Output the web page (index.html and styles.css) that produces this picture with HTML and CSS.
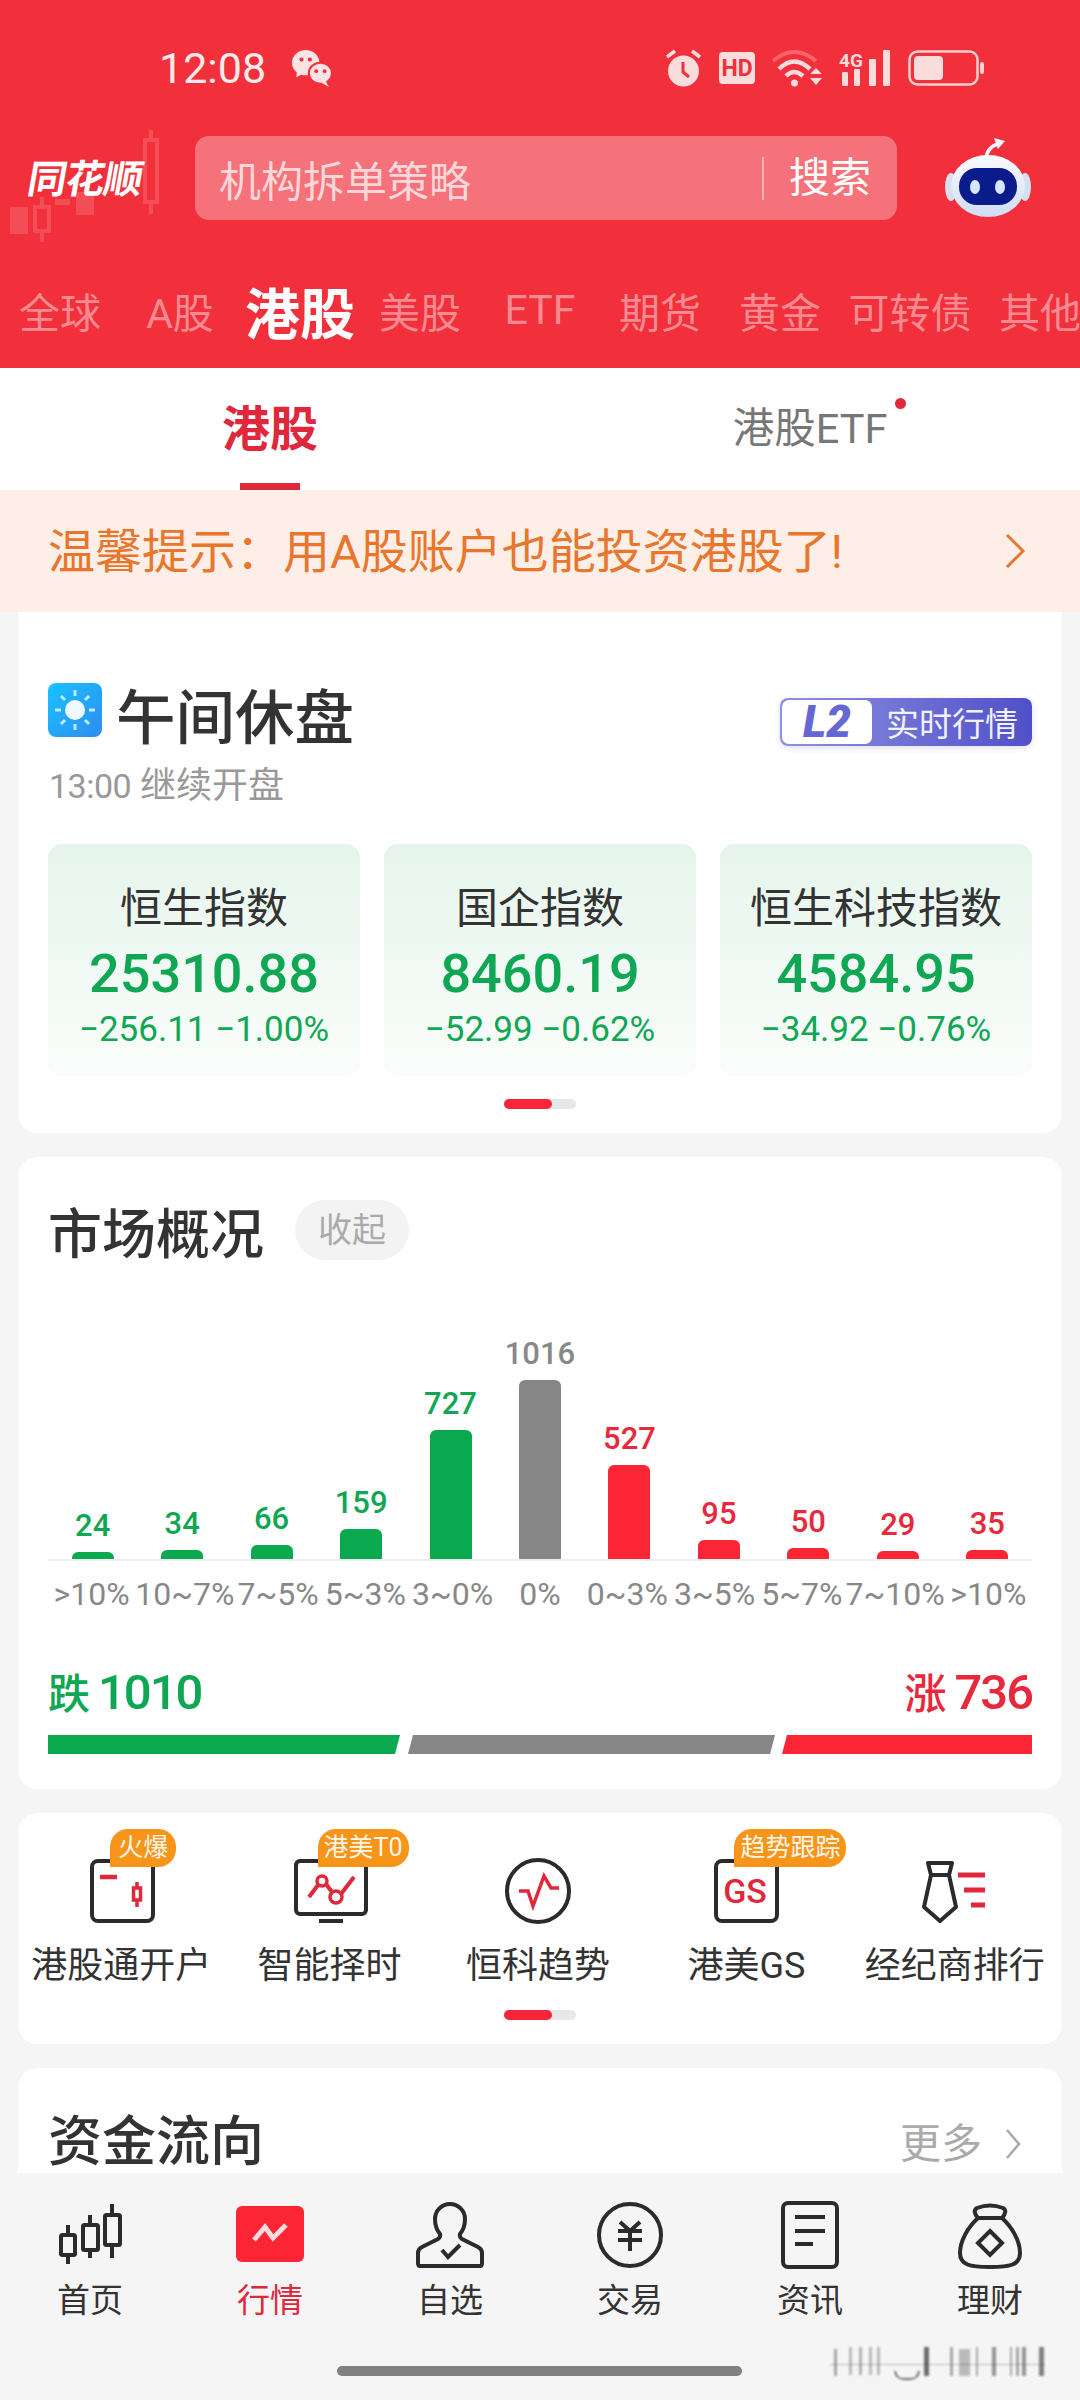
FILE: index.html
```html
<!DOCTYPE html>
<html lang="zh-CN">

<head>
    <meta charset="UTF-8">
    <meta name="viewport" content="width=device-width, initial-scale=1.0">
    <title>同花顺 行情</title>
    <link rel="stylesheet" href="styles.css">
</head>

<body>
    <div class="phone">
        <header class="top">
            <div class="status">
                <span class="time">12:08</span>
                <svg class="wechat" width="40" height="38" viewBox="0 0 38 36">
                    <ellipse cx="13" cy="13" rx="13" ry="12" fill="#fde3e3" />
                    <path d="M5 20 L4 27 L11 23 Z" fill="#fde3e3" />
                    <circle cx="9" cy="10" r="2" fill="#f1303b" />
                    <circle cx="17" cy="10" r="2" fill="#f1303b" />
                    <ellipse cx="27" cy="23" rx="11" ry="10" fill="#fde3e3" stroke="#f1303b" stroke-width="2" />
                    <path d="M32 30 L35 36 L28 32 Z" fill="#fde3e3" />
                    <circle cx="23" cy="21" r="1.8" fill="#f1303b" />
                    <circle cx="31" cy="21" r="1.8" fill="#f1303b" />
                </svg>
                <div class="status-icons">
                    <svg width="37" height="38" viewBox="0 0 37 38">
                        <circle cx="18.5" cy="22" r="15.5" fill="#fbdcdc" />
                        <path d="M18 13 V23 L24 28" fill="none" stroke="#f1303b" stroke-width="3" />
                        <path d="M2 8 L10 2 M35 8 L27 2" stroke="#fbdcdc" stroke-width="3.5" />
                    </svg>
                    <svg width="36" height="32" viewBox="0 0 36 32">
                        <rect width="36" height="32" rx="4" fill="#fbdcdc" />
                        <text class="hd-text" x="18" y="24" text-anchor="middle">HD</text>
                    </svg>
                    <svg width="50" height="37" viewBox="0 0 50 37">
                        <path d="M1 11 Q22 -7 44 11" fill="none" stroke="#f8636b" stroke-width="4" />
                        <path d="M7 19 Q22 4 38 19" fill="none" stroke="#fbdcdc" stroke-width="4.5" />
                        <path d="M14 26 Q22 18 31 26" fill="none" stroke="#fbdcdc" stroke-width="4.5" />
                        <circle cx="22.500" cy="33" r="3.500" fill="#fbdcdc" />
                        <path d="M38 24 L44 18 L50 24 Z M38 28 L50 28 L44 35 Z" fill="#fbdcdc" />
                    </svg>
                    <svg width="52" height="36" viewBox="0 0 52 36">
                        <text class="net-text" x="0" y="17">4G</text>
                        <rect x="3" y="22" width="6" height="14" rx="1" fill="#fbdcdc" />
                        <rect x="15" y="19" width="6" height="17" rx="1" fill="#fbdcdc" />
                        <rect x="30" y="9" width="7" height="27" rx="1" fill="#fbdcdc" />
                        <rect x="44" y="0" width="7" height="36" rx="1" fill="#fbdcdc" />
                    </svg>
                    <svg width="76" height="36" viewBox="0 0 76 36">
                        <rect x="1.500" y="1.500" width="68" height="33" rx="8" fill="none" stroke="#fbcfd0" stroke-width="2.500" />
                        <rect x="6" y="6" width="29" height="24" rx="4" fill="#fbdcdc" />
                        <rect x="72" y="12" width="4" height="12" rx="2" fill="#fbcfd0" />
                    </svg>
                </div>
            </div>

            <div class="search-row">
                <div class="logo">
                    <svg class="logo-bg" width="195" height="120" viewBox="0 0 195 120">
                        <g fill="#fff" opacity="0.14">
                            <rect x="10" y="85" width="18" height="27" />
                            <rect x="76" y="70" width="18" height="23" />
                            <rect x="55" y="77" width="15" height="6" />
                        </g>
                        <g fill="none" stroke="#fff" stroke-width="4" opacity="0.14">
                            <rect x="35" y="85" width="14" height="24" />
                            <path d="M42 75 V85 M42 109 V120" />
                            <rect x="145" y="18" width="12" height="62" />
                            <path d="M151 8 V18 M151 80 V92" />
                        </g>
                    </svg>
                    <span class="logo-text">同花顺</span>
                </div>
                <div class="search">
                    <span class="search-hint">机构拆单策略</span>
                    <span class="search-btn">搜索</span>
                </div>
                <svg class="robot" width="100" height="90" viewBox="0 0 100 90">
                    <defs>
                        <linearGradient id="robotHead" x1="0" y1="0" x2="0" y2="1">
                            <stop offset="0" stop-color="#fbfcff" />
                            <stop offset="1" stop-color="#cfdcf2" />
                        </linearGradient>
                    </defs>
                    <path d="M46 26 Q47 14 58 11" fill="none" stroke="#f4f7fd" stroke-width="3.500" />
                    <path d="M54 5 L65 8 L58 16 Z" fill="#f4f7fd" />
                    <ellipse cx="11" cy="54" rx="6" ry="14" fill="#d5dff0" />
                    <ellipse cx="85" cy="54" rx="6" ry="14" fill="#d5dff0" />
                    <ellipse cx="48" cy="53" rx="37" ry="31" fill="url(#robotHead)" />
                    <rect x="19" y="35" width="58" height="37" rx="18" fill="#0a1c8c" />
                    <ellipse cx="35" cy="54" rx="5" ry="7" fill="#d6e6ff" />
                    <ellipse cx="60" cy="54" rx="5" ry="7" fill="#d6e6ff" />
                </svg>
            </div>

            <nav class="market-tabs">
                <span class="market-tab">全球</span>
                <span class="market-tab">A股</span>
                <span class="market-tab active">港股</span>
                <span class="market-tab">美股</span>
                <span class="market-tab">ETF</span>
                <span class="market-tab">期货</span>
                <span class="market-tab">黄金</span>
                <span class="market-tab wide">可转债</span>
                <span class="market-tab">其他</span>
            </nav>
        </header>

        <div class="subtabs">
            <div class="subtab active">港股</div>
            <div class="subtab">港股ETF<i class="red-dot"></i></div>
        </div>

        <div class="notice">
            <span class="notice-text">温馨提示：用A股账户也能投资港股了!</span>
            <svg width="22" height="36" viewBox="0 0 22 36">
                <path d="M3 2 L19 18 L3 34" fill="none" stroke="#e8762c" stroke-width="3" />
            </svg>
        </div>

        <main class="content">
            <section class="card card-break">
                <div class="break-head">
                    <div class="break-title">
                        <svg width="54" height="54" viewBox="0 0 54 54">
                            <defs>
                                <linearGradient id="sunBg" x1="0" y1="0" x2="1" y2="1">
                                    <stop offset="0" stop-color="#17c3ff" />
                                    <stop offset="1" stop-color="#2f8cf0" />
                                </linearGradient>
                            </defs>
                            <rect width="54" height="54" rx="8" fill="url(#sunBg)" />
                            <circle cx="27" cy="27" r="10" fill="#eefaff" />
                            <g stroke="#bfeaff" stroke-width="3">
                                <path d="M27 7 V13 M27 41 V47 M7 27 H13 M41 27 H47 M13 13 L17 17 M41 13 L37 17 M13 41 L17 37 M41 41 L37 37" />
                            </g>
                        </svg>
                        <h2>午间休盘</h2>
                    </div>
                    <div class="l2-badge">
                        <span class="l2-mark">L2</span>
                        <span class="l2-text">实时行情</span>
                    </div>
                </div>
                <p class="break-sub"><span class="break-time">13:00</span> 继续开盘</p>

                <div class="index-grid">
                    <div class="index-card">
                        <div class="index-name">恒生指数</div>
                        <div class="index-value">25310.88</div>
                        <div class="index-change">−256.11 −1.00%</div>
                    </div>
                    <div class="index-card">
                        <div class="index-name">国企指数</div>
                        <div class="index-value">8460.19</div>
                        <div class="index-change">−52.99 −0.62%</div>
                    </div>
                    <div class="index-card">
                        <div class="index-name">恒生科技指数</div>
                        <div class="index-value">4584.95</div>
                        <div class="index-change">−34.92 −0.76%</div>
                    </div>
                </div>
                <div class="pager"><i></i></div>
            </section>

            <section class="card card-overview">
                <div class="overview-head">
                    <h2 class="section-title">市场概况</h2>
                    <span class="collapse">收起</span>
                </div>

                <div class="chart">
                    <div class="chart-col down"><span>24</span><i style="height:7px"></i></div>
                    <div class="chart-col down"><span>34</span><i style="height:9px"></i></div>
                    <div class="chart-col down"><span>66</span><i style="height:14px"></i></div>
                    <div class="chart-col down"><span>159</span><i style="height:30px"></i></div>
                    <div class="chart-col down"><span>727</span><i style="height:129px"></i></div>
                    <div class="chart-col flat"><span>1016</span><i style="height:179px"></i></div>
                    <div class="chart-col up"><span>527</span><i style="height:94px"></i></div>
                    <div class="chart-col up"><span>95</span><i style="height:19px"></i></div>
                    <div class="chart-col up"><span>50</span><i style="height:11px"></i></div>
                    <div class="chart-col up"><span>29</span><i style="height:8px"></i></div>
                    <div class="chart-col up"><span>35</span><i style="height:9px"></i></div>
                </div>
                <div class="chart-axis">
                    <span>&gt;10%</span><span>10~7%</span><span>7~5%</span><span>5~3%</span><span>3~0%</span><span>0%</span><span>0~3%</span><span>3~5%</span><span>5~7%</span><span>7~10%</span><span>&gt;10%</span>
                </div>

                <div class="totals">
                    <div class="total down"><small>跌</small>1010</div>
                    <div class="total up"><small>涨</small>736</div>
                </div>
                <div class="ratio">
                    <i class="ratio-down"></i>
                    <i class="ratio-flat"></i>
                    <i class="ratio-up"></i>
                </div>
            </section>

            <section class="card card-tools">
                <div class="tools">
                    <div class="tool">
                        <span class="tool-badge">火爆</span>
                        <svg width="80" height="76" viewBox="0 0 80 76">
                            <rect x="11" y="7" width="61" height="60" rx="6" class="ink" />
                            <path d="M19 23 H36" class="red" stroke-width="4.500" />
                            <path d="M56 28 V33 M56 47 V53" class="red" stroke-width="3.500" />
                            <rect x="52.500" y="34" width="7" height="12" class="red" stroke-width="3.500" />
                        </svg>
                        <div class="tool-name">港股通开户</div>
                    </div>
                    <div class="tool">
                        <span class="tool-badge">港美T0</span>
                        <svg width="80" height="76" viewBox="0 0 80 76">
                            <rect x="6" y="7" width="70" height="53" rx="4" class="ink" />
                            <path d="M29 67 H53" class="ink" />
                            <path d="M19 43 L28 31 M36 30 L42 38 M51 40 L64 23" class="red" stroke-width="4" />
                            <circle cx="32" cy="27" r="5" class="red" stroke-width="3.500" />
                            <circle cx="46" cy="43" r="6" class="red" stroke-width="3.500" />
                        </svg>
                        <div class="tool-name">智能择时</div>
                    </div>
                    <div class="tool">
                        <svg width="80" height="76" viewBox="0 0 80 76">
                            <circle cx="40" cy="37" r="31" class="ink" />
                            <path d="M21 37 H30 L35 52 L46 22 L53 34 H61" class="red" stroke-width="3.500" />
                        </svg>
                        <div class="tool-name">恒科趋势</div>
                    </div>
                    <div class="tool">
                        <span class="tool-badge">趋势跟踪</span>
                        <svg width="80" height="76" viewBox="0 0 80 76">
                            <rect x="10" y="7" width="61" height="60" rx="6" class="ink" />
                            <text class="gs-text" x="39" y="49" text-anchor="middle">GS</text>
                        </svg>
                        <div class="tool-name">港美GS</div>
                    </div>
                    <div class="tool">
                        <svg width="80" height="76" viewBox="0 0 80 76">
                            <path d="M13 9 H37 L34 21 H16 Z M16 21 L9 53 L25 67 L41 53 L34 21" class="ink" stroke-linejoin="round" />
                            <path d="M43 21 H70 M49 36 H70 M56 51 H70" class="red" stroke-width="5" />
                        </svg>
                        <div class="tool-name">经纪商排行</div>
                    </div>
                </div>
                <div class="pager"><i></i></div>
            </section>

            <section class="card card-flow">
                <h2 class="section-title">资金流向</h2>
                <div class="more">
                    更多
                    <svg width="18" height="32" viewBox="0 0 18 32">
                        <path d="M3 2 L15 16 L3 30" fill="none" stroke="#a8a8a8" stroke-width="2.500" />
                    </svg>
                </div>
            </section>
        </main>

        <footer class="bottom">
            <nav class="bottom-nav">
                <div class="nav-item">
                    <svg width="80" height="70" viewBox="0 0 80 70">
                        <g class="ink">
                            <rect x="11" y="34" width="14" height="20" rx="1.500" />
                            <path d="M18 24 V34 M18 54 V63" />
                            <rect x="33" y="24" width="15" height="25" rx="1.500" />
                            <path d="M40 14 V24 M40 49 V57" />
                            <rect x="55" y="14" width="15" height="30" rx="1.500" />
                            <path d="M62 3 V14 M62 44 V57" />
                        </g>
                    </svg>
                    <span>首页</span>
                </div>
                <div class="nav-item active">
                    <svg width="80" height="70" viewBox="0 0 80 70">
                        <rect x="6" y="5" width="68" height="56" rx="6" fill="#fb2535" />
                        <path d="M24 39 L35 26 L43 37 L56 24" fill="none" stroke="#ffd9dc" stroke-width="5" />
                    </svg>
                    <span>行情</span>
                </div>
                <div class="nav-item">
                    <svg width="80" height="70" viewBox="0 0 80 70">
                        <path class="ink" d="M10 65 H70 Q72 65 72 62 V52 Q72 48 68 46 L52 38 Q49 36 50 33 Q55 27 55 18 A15 15 0 0 0 25 18 Q25 27 30 33 Q31 36 28 38 L12 46 Q8 48 8 52 V62 Q8 65 10 65 Z" />
                        <path class="ink" d="M32 49 L38 56 L50 44" />
                    </svg>
                    <span>自选</span>
                </div>
                <div class="nav-item">
                    <svg width="80" height="70" viewBox="0 0 80 70">
                        <circle class="ink" cx="40" cy="34" r="31" />
                        <path class="ink" d="M30 21 L40 30 L50 21 M28 30 H52 M28 39 H52 M40 30 V50" />
                    </svg>
                    <span>交易</span>
                </div>
                <div class="nav-item">
                    <svg width="80" height="70" viewBox="0 0 80 70">
                        <rect class="ink" x="13" y="2" width="54" height="64" rx="5" />
                        <path class="ink" d="M25 16 H55 M25 30 H55 M25 43 H43" />
                    </svg>
                    <span>资讯</span>
                </div>
                <div class="nav-item">
                    <svg width="80" height="70" viewBox="0 0 80 70">
                        <path class="ink" d="M28 17 C18 26 10 40 10 52 C10 64 20 66 40 66 C60 66 70 64 70 52 C70 40 62 26 52 17 Z" />
                        <path class="ink" d="M28 17 Q22 10 27 7 Q40 2 53 7 Q58 10 52 17" />
                        <path class="ink" d="M40 30 L52 42 L40 54 L28 42 Z" />
                    </svg>
                    <span>理财</span>
                </div>
            </nav>
            <div class="home-bar"></div>

            <svg class="watermark" width="225" height="36" viewBox="0 0 225 36">
                <g fill="#333">
                    <rect x="4" y="4" width="3" height="27" opacity="0.4" />
                    <rect x="19" y="2" width="3" height="28" opacity="0.3" />
                    <rect x="29" y="2" width="3" height="28" opacity="0.35" />
                    <rect x="39" y="2" width="3" height="28" opacity="0.3" />
                    <rect x="47" y="2" width="3" height="28" opacity="0.3" />
                    <rect x="94" y="2" width="5" height="29" opacity="0.7" />
                    <rect x="120" y="2" width="3" height="29" opacity="0.4" />
                    <rect x="129" y="4" width="11" height="27" opacity="0.3" />
                    <rect x="146" y="2" width="2" height="29" opacity="0.4" />
                    <rect x="162" y="2" width="4" height="29" opacity="0.5" />
                    <rect x="180" y="2" width="2" height="29" opacity="0.4" />
                    <rect x="186" y="2" width="3" height="29" opacity="0.4" />
                    <rect x="192" y="2" width="4" height="29" opacity="0.5" />
                    <rect x="209" y="2" width="5" height="29" opacity="0.6" />
                    <rect x="0" y="19" width="215" height="1" opacity="0.3" />
                </g>
                <path d="M65 26 Q66 34 74 34 H80 Q88 34 89 26" fill="none" stroke="#444" stroke-width="1.500" />
            </svg>
        </footer>
    </div>
</body>

</html>
```

FILE: styles.css
```css
* {
    box-sizing: border-box;
}

body {
    margin: 0;
    font-family: Roboto, "Noto Sans CJK SC", sans-serif;
    color: #333;
    background: #f5f5f5;
}

h2,
p {
    margin: 0;
}

.phone {
    width: 1080px;
    height: 2400px;
    display: flex;
    flex-direction: column;
    overflow: hidden;
    background: #f5f5f5;
}

/* Red header */
.top {
    height: 368px;
    flex-shrink: 0;
    background: #f1303b;
    color: #fff;
}

.status {
    height: 136px;
    padding: 0 96px 0 159px;
    display: flex;
    align-items: center;
}

.time {
    font-size: 43px;
    color: #fdeaea;
}

.wechat {
    margin-left: 26px;
}

.status-icons {
    margin-left: auto;
    display: flex;
    align-items: center;
    gap: 17px;
}

.hd-text {
    font-size: 23px;
    font-weight: 700;
    fill: #f1303b;
}

.net-text {
    font-size: 19px;
    font-weight: 700;
    fill: #fbdcdc;
}

.search-row {
    height: 84px;
    display: flex;
    align-items: center;
}

.logo {
    width: 195px;
    height: 84px;
    flex-shrink: 0;
    position: relative;
}

.logo-bg {
    position: absolute;
    left: 0;
    top: -14px;
}

.logo-text {
    position: absolute;
    left: 28px;
    top: 19px;
    font-size: 39px;
    line-height: 50px;
    font-weight: 700;
    letter-spacing: -1px;
    transform: skewX(-10deg);
}

.search {
    width: 702px;
    height: 84px;
    flex-shrink: 0;
    padding-left: 24px;
    display: flex;
    align-items: center;
    justify-content: space-between;
    background: rgba(255, 255, 255, 0.32);
    border-radius: 14px;
}

.search-hint {
    font-size: 42px;
    color: rgba(255, 255, 255, 0.72);
}

.search-btn {
    width: 135px;
    height: 43px;
    padding-left: 25px;
    border-left: 2px solid rgba(255, 255, 255, 0.45);
    font-size: 41px;
    line-height: 43px;
    white-space: nowrap;
}

.robot {
    margin-left: 43px;
    flex-shrink: 0;
}

.market-tabs {
    height: 148px;
    padding-top: 32px;
    display: flex;
    align-items: center;
}

.market-tab {
    width: 120px;
    flex-shrink: 0;
    text-align: center;
    font-size: 41px;
    color: rgba(255, 255, 255, 0.45);
    white-space: nowrap;
}

.market-tab.wide {
    width: 140px;
}

.market-tab.active {
    font-size: 55px;
    font-weight: 700;
    color: #fff;
}

/* Sub tabs */
.subtabs {
    height: 122px;
    flex-shrink: 0;
    display: flex;
    background: #fff;
}

.subtab {
    position: relative;
    width: 50%;
    padding-bottom: 8px;
    display: flex;
    align-items: center;
    justify-content: center;
    font-size: 41.500px;
    color: #777;
}

.subtab.active {
    font-size: 48px;
    font-weight: 700;
    color: #e0283c;
}

.subtab.active::after {
    content: "";
    position: absolute;
    left: 240px;
    bottom: 0;
    width: 60px;
    height: 7px;
    background: #e0283c;
}

.red-dot {
    position: absolute;
    left: 355px;
    top: 30px;
    width: 11px;
    height: 11px;
    border-radius: 50%;
    background: #e0283c;
}

.notice {
    height: 122px;
    flex-shrink: 0;
    padding: 0 54px 0 48px;
    display: flex;
    align-items: center;
    justify-content: space-between;
    background: #fdeee7;
    font-size: 47px;
    color: #e8762c;
}

.notice-text {
    margin-bottom: 8px;
}

/* Page content */
.content {
    flex: 1;
    min-height: 0;
    padding: 0 18px;
    overflow: hidden;
    display: flex;
    flex-direction: column;
    gap: 24px;
}

.card {
    flex-shrink: 0;
    background: #fff;
    border-radius: 20px;
}

.card-break {
    height: 521px;
    padding: 71px 30px 0;
    border-radius: 0 0 20px 20px;
}

.break-head {
    display: flex;
    align-items: flex-start;
    justify-content: space-between;
}

.break-title {
    display: flex;
    align-items: flex-start;
    gap: 14px;
}

.break-title h2 {
    padding-top: 6px;
    font-size: 59.500px;
    line-height: 60px;
    font-weight: 500;
    color: #333;
}

.l2-badge {
    width: 252px;
    height: 48px;
    margin-top: 15px;
    display: flex;
    align-items: center;
    border-radius: 8px;
    background: linear-gradient(90deg, #8f91e0, #4f50c8);
    box-shadow: 0 2px 6px rgba(90, 90, 200, 0.2);
}

.l2-mark {
    width: 90px;
    height: 44px;
    margin-left: 2px;
    border-radius: 7px;
    background: #fff;
    text-align: center;
    font-size: 44px;
    line-height: 44px;
    font-weight: 900;
    font-style: italic;
    color: #6567d3;
}

.l2-text {
    margin-left: 14px;
    font-size: 33px;
    color: #f1f1ff;
}

.break-sub {
    margin: 15px 0 0 1px;
    font-size: 36px;
    line-height: 44px;
    color: #999;
}

.break-time {
    font-size: 34px;
    letter-spacing: -0.5px;
}

.index-grid {
    margin-top: 36px;
    display: grid;
    grid-template-columns: repeat(3, 312px);
    justify-content: space-between;
}

.index-card {
    height: 232px;
    padding-top: 40px;
    display: flex;
    flex-direction: column;
    align-items: center;
    border-radius: 14px;
    background: linear-gradient(180deg, #e6f5ec, #fafdfb);
}

.index-name {
    font-size: 42px;
    line-height: 50px;
    color: #333;
}

.index-value {
    margin-top: 10px;
    font-size: 54px;
    line-height: 60px;
    font-weight: 500;
    color: #0fa753;
}

.index-change {
    margin-top: 6px;
    font-size: 35px;
    line-height: 40px;
    color: #0fa753;
}

.pager {
    width: 72px;
    height: 10px;
    margin: 23px auto 0;
    border-radius: 5px;
    background: #e8e8e8;
}

.pager i {
    display: block;
    width: 48px;
    height: 10px;
    border-radius: 5px;
    background: #f6263a;
}

/* Market overview */
.card-overview {
    height: 632px;
    padding: 43px 30px 0;
}

.overview-head {
    display: flex;
    align-items: flex-start;
    gap: 31px;
}

.overview-head .section-title {
    padding-top: 6px;
}

.section-title {
    font-size: 54px;
    line-height: 60px;
    font-weight: 500;
    color: #333;
}

.collapse {
    width: 114px;
    height: 60px;
    border-radius: 30px;
    background: #f3f3f3;
    text-align: center;
    font-size: 34px;
    line-height: 60px;
    color: #aaa;
}

.chart {
    height: 270px;
    margin-top: 25px;
    display: grid;
    grid-template-columns: repeat(11, 1fr);
    align-items: end;
    border-bottom: 2px solid #eee;
}

.chart-col {
    display: flex;
    flex-direction: column;
    align-items: center;
}

.chart-col span {
    margin-bottom: 8px;
    font-size: 31px;
    line-height: 36px;
    font-weight: 500;
}

.chart-col i {
    width: 42px;
    border-radius: 6px 6px 0 0;
}

.chart-col.down span {
    color: #0fa753;
}

.chart-col.flat span {
    color: #888;
}

.chart-col.up span {
    color: #e8283c;
}

.chart-col.down i {
    background: #0aa84f;
}

.chart-col.flat i {
    background: #868686;
}

.chart-col.up i {
    background: #fb2535;
}

.chart-axis {
    margin-top: 13px;
    display: grid;
    grid-template-columns: repeat(11, 1fr);
    font-size: 32px;
    line-height: 40px;
    color: #888;
}

.chart-axis span {
    display: flex;
    justify-content: center;
    white-space: nowrap;
}

.totals {
    margin-top: 49px;
    display: flex;
    justify-content: space-between;
}

.total {
    font-size: 49px;
    line-height: 60px;
    font-weight: 500;
    letter-spacing: -2px;
}

.total small {
    margin-right: 8px;
    font-size: 42px;
    font-weight: 500;
    letter-spacing: 0;
}

.total.down {
    color: #0fa753;
}

.total.up {
    color: #e8283c;
}

.ratio {
    margin-top: 10px;
    display: flex;
    gap: 8px;
}

.ratio i {
    height: 19px;
    display: block;
}

.ratio-down {
    width: 352px;
    background: #0aa84f;
    clip-path: polygon(0 0, 100% 0, calc(100% - 5px) 100%, 0 100%);
}

.ratio-flat {
    width: 367px;
    background: #868686;
    clip-path: polygon(5px 0, 100% 0, calc(100% - 5px) 100%, 0 100%);
}

.ratio-up {
    width: 250px;
    margin-left: -1px;
    background: #fb2535;
    clip-path: polygon(5px 0, 100% 0, 100% 100%, 0 100%);
}

/* Shortcuts */
.card-tools {
    height: 231px;
    padding-top: 41px;
}

.tools {
    margin: 0 3px 0 -1px;
    display: grid;
    grid-template-columns: repeat(5, 1fr);
}

.tool {
    position: relative;
    display: flex;
    flex-direction: column;
    align-items: center;
}

.tool-badge {
    position: absolute;
    left: 50%;
    top: -25px;
    min-width: 66px;
    height: 38px;
    padding: 0 6px;
    border-radius: 18px 18px 18px 0;
    background: #f7941a;
    text-align: center;
    font-size: 25px;
    line-height: 38px;
    color: #fff6e8;
    white-space: nowrap;
}

.tool:nth-child(1) .tool-badge {
    margin-left: -11px;
}

.tool:nth-child(2) .tool-badge {
    margin-left: -12px;
}

.tool:nth-child(4) .tool-badge {
    margin-left: -12px;
}

.tool-name {
    margin-top: 11px;
    font-size: 36px;
    line-height: 50px;
    color: #333;
    white-space: nowrap;
}

.card-tools .pager {
    margin-top: 19px;
}

.ink {
    fill: none;
    stroke: #2b2b2b;
    stroke-width: 4;
}

.red {
    fill: none;
    stroke: #e0283c;
}

.gs-text {
    font-size: 34px;
    font-weight: 500;
    fill: #e0283c;
}

/* Fund flow, cut by the bottom bar */
.card-flow {
    height: 240px;
    padding: 47px 40px 0 30px;
    display: flex;
    justify-content: space-between;
    align-items: flex-start;
    border-radius: 20px 20px 0 0;
}

.card-flow .section-title {
    line-height: 56px;
}

.more {
    margin-top: 4px;
    display: flex;
    align-items: center;
    gap: 22px;
    font-size: 41px;
    line-height: 50px;
    color: #aaa;
}

/* Bottom bar */
.bottom {
    position: relative;
    height: 227px;
    flex-shrink: 0;
    background: #f5f5f5;
}

.bottom-nav {
    padding-top: 28px;
    display: flex;
}

.nav-item {
    width: 180px;
    display: flex;
    flex-direction: column;
    align-items: center;
    gap: 8px;
    font-size: 33px;
    line-height: 44px;
    color: #333;
}

.nav-item.active {
    color: #e0283c;
}

.home-bar {
    width: 405px;
    height: 10px;
    margin: 43px 0 0 337px;
    border-radius: 5px;
    background: #808080;
}

.watermark {
    position: absolute;
    left: 830px;
    top: 172px;
    filter: blur(1px);
}
```
